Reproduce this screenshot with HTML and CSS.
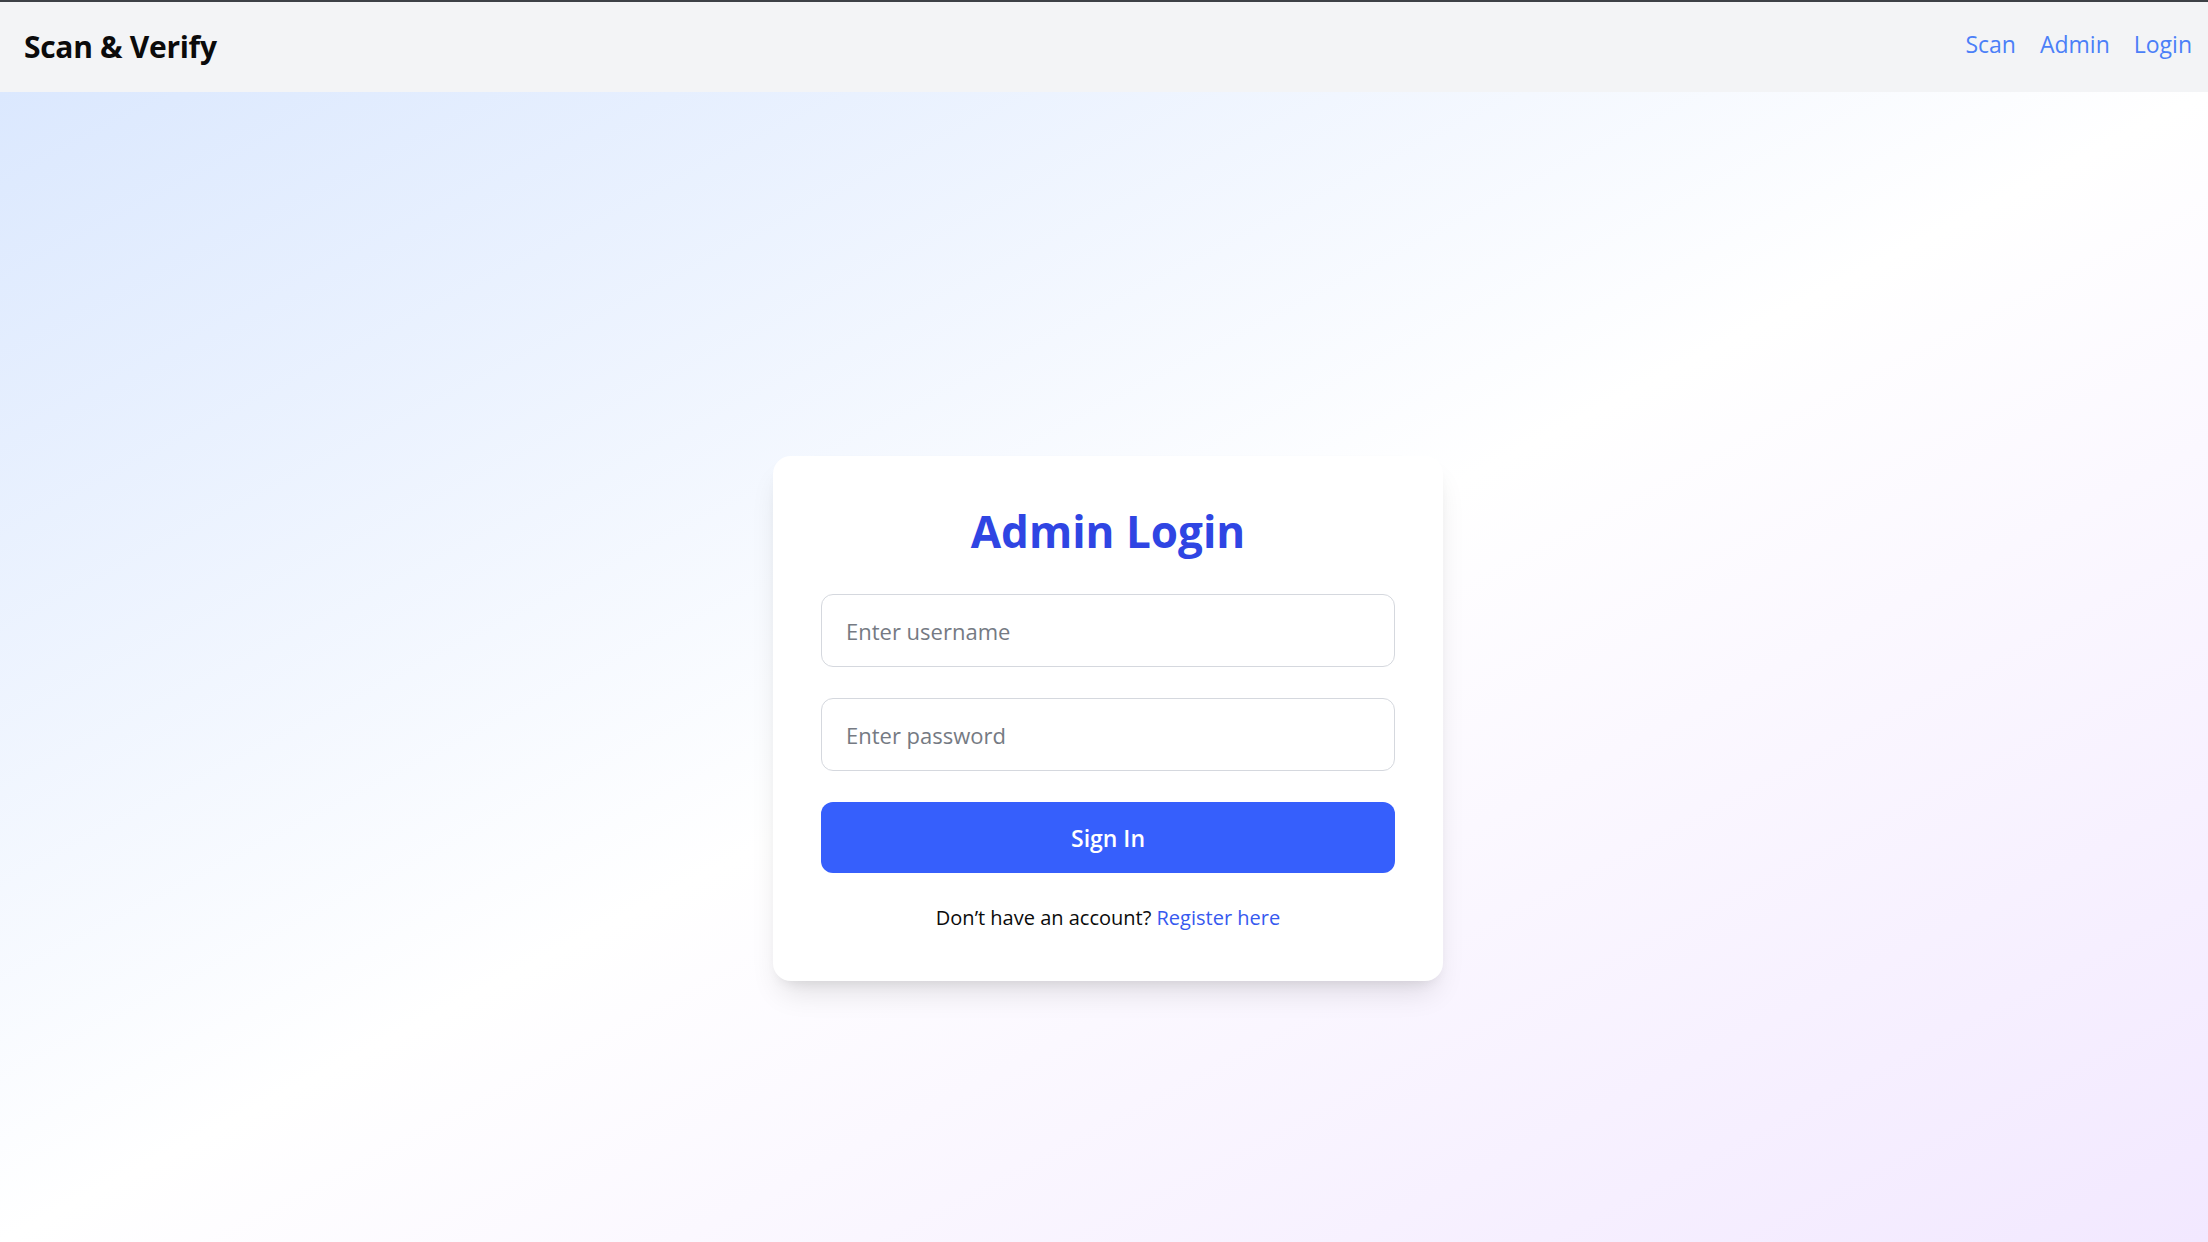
FILE: index.html
```html
<!DOCTYPE html>
<html lang="en">
<head>
<meta charset="utf-8">
<title>Scan &amp; Verify</title>
<link rel="stylesheet" href="styles.css">
</head>
<body>
<header class="topbar">
  <div class="brand">Scan &amp; Verify</div>
  <nav class="nav">
    <a href="#" class="nav-link">Scan</a>
    <a href="#" class="nav-link">Admin</a>
    <a href="#" class="nav-link">Login</a>
  </nav>
</header>
<main class="main">
  <section class="card">
    <h1 class="card-title">Admin Login</h1>
    <form class="form">
      <input class="field" type="text" placeholder="Enter username">
      <input class="field" type="password" placeholder="Enter password">
      <button class="btn" type="button">Sign In</button>
    </form>
    <p class="foot">Don’t have an account? <a href="#" class="foot-link">Register here</a></p>
  </section>
</main>
</body>
</html>
```
FILE: styles.css
```css
* { box-sizing: border-box; }
html, body { margin: 0; padding: 0; }
body {
  font-family: "Open Sans", "Noto Sans", "Liberation Sans", sans-serif;
  color: #0b0b0b;
  background: #ffffff;
}
.topbar {
  height: 92px;
  border-top: 2px solid #3d4146;
  background: #f3f4f6;
  display: flex;
  align-items: center;
  justify-content: space-between;
  padding: 0 16px 4px 24px;
}
.brand {
  font-size: 30px;
  font-weight: 700;
  letter-spacing: -0.3px;
  margin-top: 2px;
}
.nav {
  display: flex;
  gap: 24px;
  margin-bottom: 2px;
}
.nav-link {
  color: #4b7ff8;
  text-decoration: none;
  font-size: 23px;
}
.main {
  height: calc(100vh - 92px);
  padding: 103px 0 0 8px;
  display: flex;
  align-items: center;
  justify-content: center;
  background: linear-gradient(to bottom right, #dbe8fe 0%, #ffffff 50%, #f2e8ff 100%);
}
.card {
  width: 670px;
  padding: 48px;
  background: #ffffff;
  border-radius: 18px;
  box-shadow: 0 18px 30px -8px rgba(0, 0, 0, 0.12), 0 8px 14px -8px rgba(0, 0, 0, 0.1);
}
.card-title {
  margin: 0 0 36px;
  text-align: center;
  font-size: 44px;
  line-height: 54px;
  font-weight: 700;
  color: #2f45e3;
}
.form {
  display: flex;
  flex-direction: column;
  gap: 31px;
}
.field {
  height: 73px;
  width: 100%;
  border: 1.5px solid #d5d8de;
  border-radius: 12px;
  padding: 0 24px;
  font-family: inherit;
  font-size: 22px;
  color: #111;
  outline: none;
}
.field::placeholder { color: #757a83; }
.btn {
  height: 71px;
  width: 100%;
  border: 0;
  border-radius: 12px;
  background: #365ffc;
  color: #ffffff;
  font-family: inherit;
  font-size: 23px;
  font-weight: 600;
}
.foot {
  margin: 30px 0 0;
  text-align: center;
  font-size: 20px;
  line-height: 30px;
  color: #0b0b0b;
}
.foot-link {
  color: #3659ef;
  font-weight: 500;
  text-decoration: none;
}
```
